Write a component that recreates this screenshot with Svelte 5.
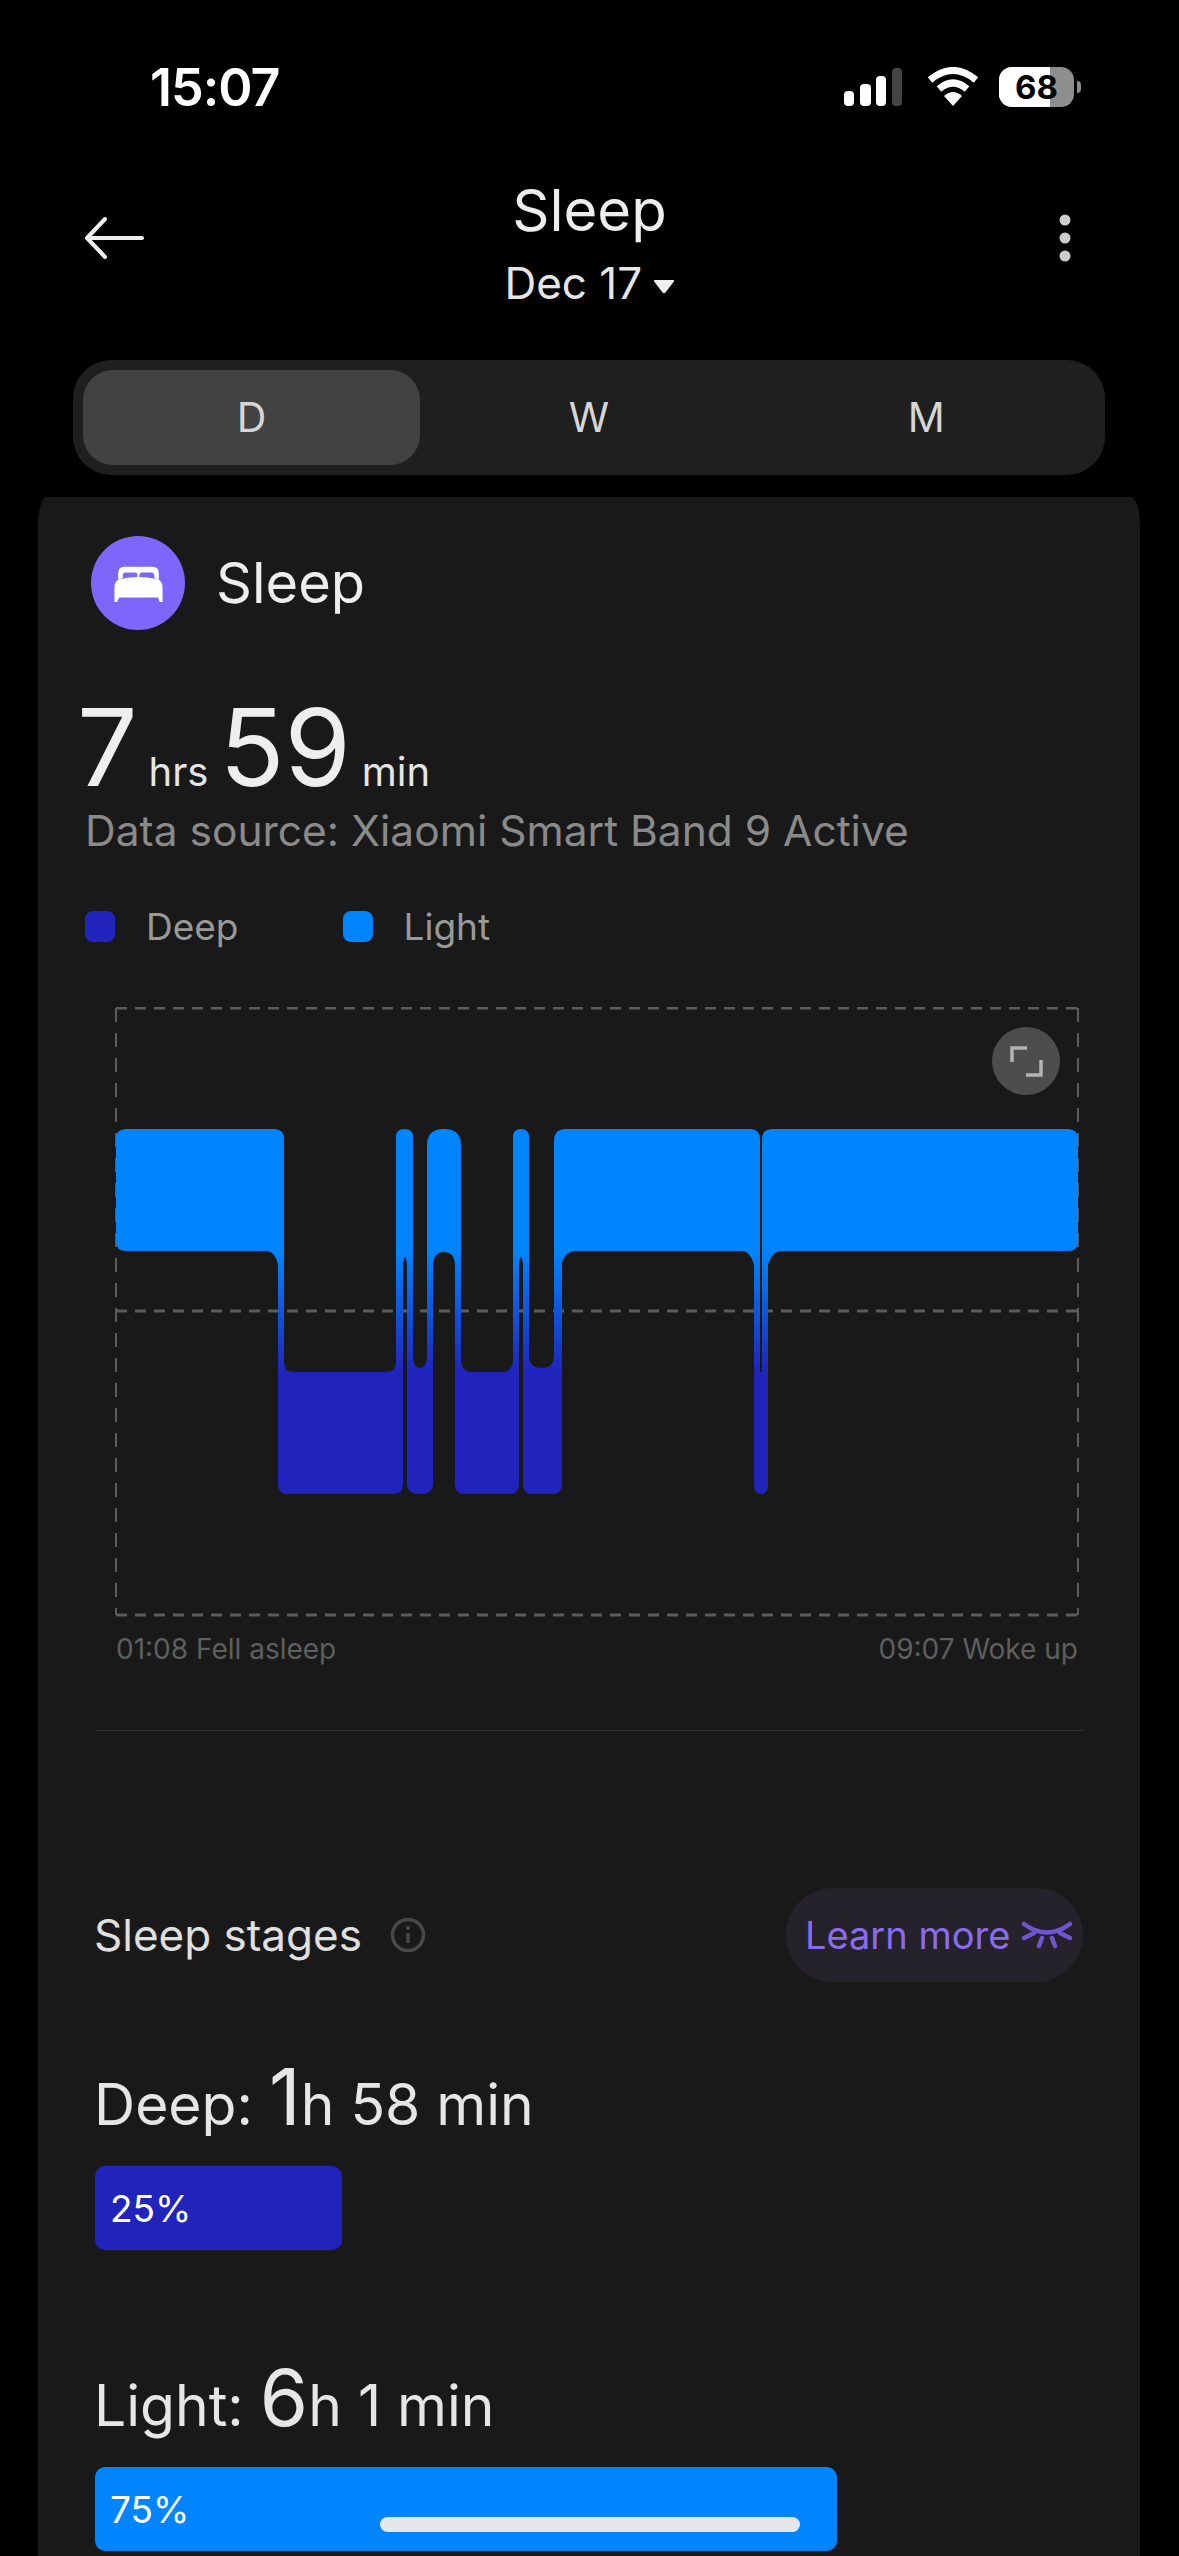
<script>
  const tabs = ['D', 'W', 'M'];
  const stages = [
    { name: 'Deep', big: '1', rest: 'h 58 min', pct: 25, width: 247, color: '#2024bc' },
    { name: 'Light', big: '6', rest: 'h 1 min', pct: 75, width: 742, color: '#0085ff' }
  ];
  const sleepPath = 'M116 1139Q116 1129 126 1129H274Q284 1129 284 1139V1362Q284 1372 294 1372H386Q396 1372 396 1362V1137Q396 1129 404.5 1129Q413 1129 413 1137V1356Q413 1368 420 1368Q427 1368 427 1356V1145Q427 1129 444 1129Q461 1129 461 1145V1360Q461 1372 473 1372H501Q513 1372 513 1360V1137Q513 1129 521 1129Q529 1129 529 1137V1356Q529 1368 541.5 1368Q554 1368 554 1356V1141Q554 1129 566 1129H750Q760 1129 760 1139V1372H762V1139Q762 1129 772 1129H1068Q1078 1129 1078 1139V1241Q1078 1251 1068 1251H782Q772 1251 768 1265V1484Q768 1494 761 1494Q754 1494 754 1484V1265Q750 1251 742 1251H576Q566 1251 562 1262V1484Q562 1494 552 1494H533Q523 1494 523 1484V1264Q521 1250 519 1264V1484Q519 1494 509 1494H465Q455 1494 455 1484V1266Q455 1252 444 1252Q433 1252 433 1266V1484Q433 1494 420 1494Q407 1494 407 1484V1264Q405 1250 403 1264V1484Q403 1494 393 1494H288Q278 1494 278 1484V1265Q275 1251 266 1251H126Q116 1251 116 1241Z';
</script>

<main>
  <div class="status">
    <span class="time">15:07</span>
    <div class="status-icons">
      <svg width="60" height="40" viewBox="0 0 60 40">
        <rect x="0" y="24" width="10" height="15" rx="4" fill="#fff" />
        <rect x="16" y="17" width="11" height="22" rx="4" fill="#fff" />
        <rect x="32" y="9" width="10" height="30" rx="4" fill="#fff" />
        <rect x="48" y="1" width="10" height="38" rx="4" fill="#444" />
      </svg>
      <svg class="wifi" width="52" height="40" viewBox="0 0 52 40">
        <path d="M3 13Q26 -6 49 13" fill="none" stroke="#fff" stroke-width="7" />
        <path d="M12 22Q26 10 40 22" fill="none" stroke="#fff" stroke-width="7" />
        <path d="M17 29Q26 21 35 29L26 39Z" fill="#fff" />
      </svg>
      <div class="battery">
        <span class="battery-level"></span>
        <span class="battery-num">68</span>
      </div>
      <span class="battery-nub"></span>
    </div>
  </div>

  <header>
    <svg class="back" width="60" height="42" viewBox="0 0 60 42">
      <path d="M58 21H3M21 2L3 21L21 40" fill="none" stroke="#eee" stroke-width="4" stroke-linecap="round" stroke-linejoin="round" />
    </svg>
    <div class="heading">
      <h1>Sleep</h1>
      <div class="date">Dec 17 <svg width="22" height="15" viewBox="0 0 22 15"><path d="M2 1H20Q22 1 20.5 3L12.5 13.5Q11 15 9.5 13.5L1.500 3Q0 1 2 1Z" fill="#eee" /></svg></div>
    </div>
    <svg class="more" width="12" height="52" viewBox="0 0 12 52">
      <circle cx="6" cy="6" r="5.500" fill="#ccc" />
      <circle cx="6" cy="24" r="5.500" fill="#ccc" />
      <circle cx="6" cy="42" r="5.500" fill="#ccc" />
    </svg>
  </header>

  <div class="tabs">
    {#each tabs as t, i}
      <div class="tab" class:active={i === 0}>{t}</div>
    {/each}
  </div>

  <section class="card">
    <div class="card-title">
      <span class="bed">
        <svg width="51" height="37" viewBox="0 0 54 40">
          <path d="M5 16V9Q5 2 12 2H42Q49 2 49 9V16L44 14V11Q44 8 41 8H31Q28 8 28 11V13H26V11Q26 8 23 8H13Q10 8 10 11V14Z" fill="#fff" />
          <path d="M1 24Q1 16 8 15Q27 11 46 15Q53 16 53 24V40H50L48 35H6L4 40H1Z" fill="#fff" />
        </svg>
      </span>
      <span class="card-name">Sleep</span>
    </div>

    <div class="duration">
      <span class="num">7</span><span class="unit first">hrs</span><span class="num">59</span><span class="unit">min</span>
    </div>
    <div class="source">Data source: Xiaomi Smart Band 9 Active</div>

    <div class="legend">
      <span class="swatch deep"></span><span class="legend-label">Deep</span>
      <span class="swatch light"></span><span class="legend-label">Light</span>
    </div>

    <svg class="chart" width="966" height="610" viewBox="114 1007 966 610">
      <defs>
        <linearGradient id="stage" gradientUnits="userSpaceOnUse" x1="0" y1="1251" x2="0" y2="1372">
          <stop offset="0" stop-color="#0085ff" />
          <stop offset="1" stop-color="#2024bc" />
        </linearGradient>
      </defs>
      <g fill="none" stroke="#5c5c5c" stroke-width="3" stroke-dasharray="11 8">
        <path d="M116 1008H1078" />
        <path d="M116 1311H1078" />
        <path d="M116 1615H1078" />
      </g>
      <g fill="none" stroke="#5c5c5c" stroke-width="2" stroke-dasharray="14 11">
        <path d="M116 1008V1615" />
        <path d="M1078 1008V1615" />
      </g>
      <path d={sleepPath} fill="url(#stage)" />
      <circle cx="1026" cy="1061" r="34" fill="#4d4d4d" />
      <path d="M1012 1062V1048H1027M1041 1060V1075H1026" fill="none" stroke="#b4b4b4" stroke-width="3.500" />
    </svg>

    <div class="chart-foot">
      <span>01:08 Fell asleep</span>
      <span>09:07 Woke up</span>
    </div>

    <div class="inner">
      <hr />
      <div class="stages-head">
        <span class="stages-title">Sleep stages</span>
        <svg class="info" width="36" height="36" viewBox="0 0 36 36">
          <circle cx="18" cy="18" r="15.500" fill="none" stroke="#484848" stroke-width="3.500" />
          <circle cx="18" cy="11" r="2.200" fill="#484848" />
          <path d="M18 16V26" stroke="#484848" stroke-width="3.500" />
        </svg>
        <div class="learn">
          Learn more
          <svg width="52" height="28" viewBox="0 0 52 28">
            <path d="M3 3Q26 20 49 3M3 17L13 12M49 17L39 12M18 25L21 17M34 25L31 17" fill="none" stroke="#6f55cf" stroke-width="4.500" stroke-linecap="round" />
          </svg>
        </div>
      </div>

      {#each stages as s}
        <div class="stage">
          <div class="stage-time">{s.name}: <span class="stage-big">{s.big}</span>{s.rest}</div>
          <div class="stage-bar" style="width: {s.width}px; background: {s.color}">{s.pct}%</div>
        </div>
      {/each}
    </div>
  </section>

  <div class="home-bar"></div>
</main>

<style>
  :global(body) {
    background: #000;
  }

  main {
    position: relative;
    width: 1179px;
    height: 2556px;
    overflow: hidden;
    background: #000;
    color: #eee;
    font-family: Inter, "Liberation Sans", sans-serif;
  }

  .status {
    height: 176px;
    display: flex;
    justify-content: space-between;
    align-items: flex-start;
    padding: 0 98px 0 150px;
    box-sizing: border-box;
  }

  .time {
    margin-top: 58px;
    font-size: 52px;
    line-height: 60px;
    font-weight: 600;
    color: #fff;
    letter-spacing: -1px;
  }

  .status-icons {
    display: flex;
    align-items: center;
    margin-top: 67px;
    height: 40px;
  }

  .wifi {
    margin-left: 23px;
  }

  .battery {
    position: relative;
    width: 75px;
    height: 40px;
    margin-left: 20px;
    border-radius: 13px;
    overflow: hidden;
    background: #8e8e8e;
    display: flex;
    align-items: center;
    justify-content: center;
  }

  .battery-level {
    position: absolute;
    left: 0;
    top: 0;
    bottom: 0;
    width: 51px;
    background: #fff;
  }

  .battery-num {
    position: relative;
    font-size: 33px;
    font-weight: 700;
    color: #000;
  }

  .battery-nub {
    width: 4px;
    height: 12px;
    margin-left: 3px;
    border-radius: 0 6px 6px 0;
    background: #8e8e8e;
  }

  header {
    height: 184px;
    display: grid;
    grid-template-columns: 1fr auto 1fr;
    align-items: start;
  }

  .back {
    margin: 41px 0 0 84px;
  }

  .more {
    justify-self: end;
    margin: 38px 108px 0 0;
  }

  .heading {
    text-align: center;
  }

  h1 {
    margin: 0;
    font-size: 58px;
    line-height: 68px;
    font-weight: 400;
    color: #eee;
  }

  .date {
    margin-top: 14px;
    font-size: 44px;
    line-height: 50px;
    color: #e6e6e6;
  }

  .date svg {
    margin-left: -2px;
    vertical-align: 5px;
  }

  .tabs {
    width: 1032px;
    height: 115px;
    margin-left: 73px;
    padding: 10px;
    box-sizing: border-box;
    display: grid;
    grid-template-columns: repeat(3, 1fr);
    background: #1f1f1f;
    border-radius: 38px;
  }

  .tab {
    display: flex;
    align-items: center;
    justify-content: center;
    padding-bottom: 2px;
    font-size: 41px;
    color: #d6d6d6;
    border-radius: 30px;
  }

  .tab.active {
    background: #424242;
  }

  .card {
    width: 1102px;
    height: 2100px;
    margin: 22px 0 0 38px;
    background: #191919;
    border-radius: 9px 9px 0 0 / 28px 28px 0 0;
  }

  .card-title {
    display: flex;
    align-items: center;
    gap: 31px;
    padding: 39px 0 0 53px;
  }

  .bed {
    width: 94px;
    height: 94px;
    border-radius: 50%;
    background: #7f66fa;
    display: flex;
    align-items: center;
    justify-content: center;
  }

  .card-name {
    font-size: 56px;
    color: #eee;
  }

  .duration {
    display: flex;
    align-items: baseline;
    margin: 62px 0 0 39px;
    height: 110px;
    line-height: 110px;
  }

  .num {
    font-size: 107px;
    color: #eee;
  }

  .unit {
    font-size: 40px;
    color: #e6e6e6;
    margin-left: 11px;
  }

  .unit.first {
    margin-right: 11px;
  }

  .source {
    margin: 4px 0 0 47px;
    font-size: 42.5px;
    line-height: 50px;
    color: #8a8a8a;
    white-space: nowrap;
  }

  .legend {
    display: flex;
    align-items: center;
    margin: 47px 0 0 47px;
    height: 46px;
  }

  .swatch {
    width: 30px;
    height: 31px;
    border-radius: 8px;
  }

  .swatch.deep {
    background: #2024bc;
  }

  .swatch.light {
    background: #0085ff;
  }

  .legend-label {
    font-size: 37px;
    color: #999;
    margin: 0 104px 0 31px;
  }

  .chart {
    display: block;
    margin: 58px 0 0 76px;
  }

  .chart-foot {
    display: flex;
    justify-content: space-between;
    width: 962px;
    margin: 15px 0 0 78px;
    font-size: 28px;
    line-height: 34px;
    color: #5f5f5f;
  }

  .inner {
    padding: 0 57px;
  }

  hr {
    border: 0;
    height: 1px;
    margin: 64px 0 0;
    background: #333;
  }

  .stages-head {
    display: flex;
    align-items: center;
    height: 94px;
    margin-top: 157px;
  }

  .stages-title {
    font-size: 44px;
    margin-left: -1px;
    color: #e0e0e0;
  }

  .info {
    margin-left: 28px;
  }

  .learn {
    margin-left: auto;
    width: 297px;
    height: 94px;
    box-sizing: border-box;
    padding-left: 19px;
    display: flex;
    align-items: center;
    gap: 11px;
    border-radius: 47px;
    background: #25222c;
    color: #8b6cf0;
    font-size: 38px;
    white-space: nowrap;
  }

  .stage {
    margin-top: 74px;
  }

  .stage + .stage {
    margin-top: 107px;
  }

  .stage-time {
    margin-left: -1px;
    font-size: 57px;
    line-height: 82px;
    color: #e6e6e6;
    white-space: nowrap;
  }

  .stage-big {
    font-size: 78px;
  }

  .stage-bar {
    height: 84px;
    margin-top: 20px;
    padding-left: 15px;
    box-sizing: border-box;
    display: flex;
    align-items: center;
    border-radius: 10px;
    font-size: 37px;
    color: #fff;
  }

  .home-bar {
    position: absolute;
    left: 380px;
    top: 2517px;
    width: 420px;
    height: 15px;
    border-radius: 8px;
    background: #e5e7ea;
  }
</style>
